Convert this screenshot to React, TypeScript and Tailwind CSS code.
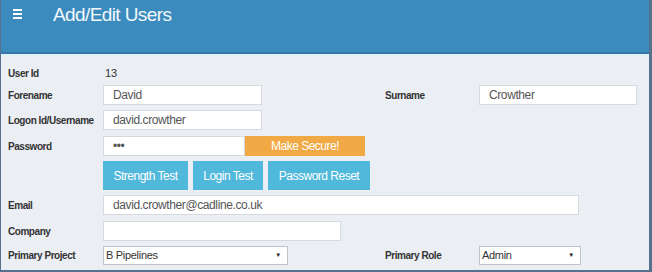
import React from 'react'

const font = "font-['Liberation_Sans',Arial,sans-serif]"

function Label({ children, w = 'w-[95px]' }: { children: React.ReactNode; w?: string }) {
  return <div className={`${w} shrink-0 text-[10px] font-bold tracking-[-0.45px] text-[#333]`}>{children}</div>
}

function Field({ value, w }: { value?: string; w: string }) {
  return (
    <div className={`${w} h-[20px] shrink-0 bg-white border border-[#d6d9de] pl-[9px] flex items-center text-[12px] tracking-[-0.4px] text-[#555]`}>
      {value}
    </div>
  )
}

function Select({ value, w }: { value: string; w: string }) {
  return (
    <div className={`${w} h-[19px] shrink-0 bg-white border border-[#bfc3c8] pl-[2px] pr-[6px] flex items-center justify-between text-[11px] tracking-[-0.3px] text-[#333]`}>
      <span>{value}</span>
      <span className="text-[6px] text-[#222]">▼</span>
    </div>
  )
}

function Btn({ children, w }: { children: React.ReactNode; w: string }) {
  return (
    <div className={`${w} h-[29px] shrink-0 bg-[#50b8db] text-white flex items-center justify-center text-[12px] tracking-[-0.5px]`}>
      {children}
    </div>
  )
}

export default function App() {
  return (
    <div className={`${font} w-[652px] h-[272px] overflow-hidden bg-[#ebeef3] border-l border-r-[3px] border-b-2 border-[#56718d]`}>
      {/* header */}
      <div className="h-[56px] bg-[#3b8bbe] border-b-4 border-b-[#3577a9] flex items-start">
        <div className="w-[52px] pl-[12px] pt-[9px] flex flex-col gap-[2px]">
          <div className="w-[9px] h-[2px] bg-white" />
          <div className="w-[9px] h-[2px] bg-white" />
          <div className="w-[9px] h-[2px] bg-white" />
        </div>
        <h1 className="pt-[3px] text-[19px] tracking-[-0.6px] text-[#f4f8fc] leading-[24px]">Add/Edit Users</h1>
      </div>
      <div className="h-[2px] bg-[#dff2f7] -mt-[2px]" />

      <div className="pl-[7px] flex flex-col">
        <div className="mt-[8px] h-[18px] flex items-center">
          <Label>User Id</Label>
          <div className="pl-[2px] text-[11px] text-[#333]">13</div>
        </div>

        <div className="mt-[3px] flex items-center">
          <Label>Forename</Label>
          <Field value="David" w="w-[159px]" />
          <div className="w-[123px]" />
          <Label w="w-[94px]">Surname</Label>
          <Field value="Crowther" w="w-[158px]" />
        </div>

        <div className="mt-[5px] flex items-center">
          <Label>Logon Id/Username</Label>
          <Field value="david.crowther" w="w-[159px]" />
        </div>

        <div className="mt-[6px] flex items-center">
          <Label>Password</Label>
          <Field value="•••" w="w-[142px]" />
          <div className="w-[120px] h-[20px] bg-[#f0a945] text-white flex items-center justify-center text-[12px] tracking-[-0.5px]">
            Make Secure!
          </div>
        </div>

        <div className="mt-[5px] flex items-center pl-[95px] gap-[5px]">
          <Btn w="w-[85px]">Strength Test</Btn>
          <Btn w="w-[70px]">Login Test</Btn>
          <Btn w="w-[102px]">Password Reset</Btn>
        </div>

        <div className="mt-[5px] flex items-center">
          <Label>Email</Label>
          <Field value="david.crowther@cadline.co.uk" w="w-[476px]" />
        </div>

        <div className="mt-[6px] flex items-center">
          <Label>Company</Label>
          <Field w="w-[238px]" />
        </div>

        <div className="mt-[5px] flex items-center">
          <Label>Primary Project</Label>
          <Select value="B Pipelines" w="w-[185px]" />
          <div className="w-[97px]" />
          <Label w="w-[94px]">Primary Role</Label>
          <Select value="Admin" w="w-[102px]" />
        </div>
      </div>
    </div>
  )
}
